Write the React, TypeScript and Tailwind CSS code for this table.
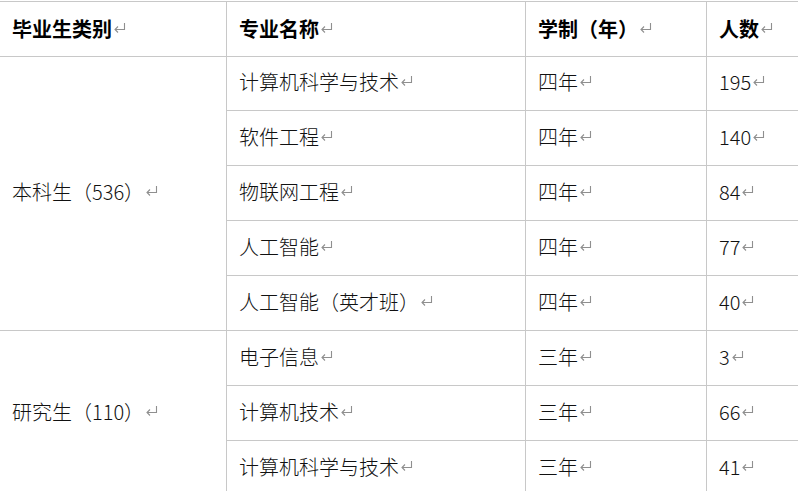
import React from "react";

const Ret = () => (
  <svg width="13" height="11" viewBox="0 0 13 11" className="ml-[1px] -mt-[3px] shrink-0" fill="none" stroke="#8f8f8f" strokeWidth="1.1">
    <path d="M11.5 1 V7.5 H2" />
    <path d="M5 4.5 L2 7.5 L5 10.5" />
  </svg>
);

const Cell = ({ children, bold, className = "" }: { children: React.ReactNode; bold?: boolean; className?: string }) => (
  <div className={`flex items-center pl-3 border-b border-r border-[#c8c8c8] whitespace-nowrap ${bold ? "font-bold text-black" : "font-light text-[#111] pb-[3px]"} ${className}`}>
    <span>{children}</span>
    <Ret />
  </div>
);

const rows: [string, string, string][] = [
  ["计算机科学与技术", "四年", "195"],
  ["软件工程", "四年", "140"],
  ["物联网工程", "四年", "84"],
  ["人工智能", "四年", "77"],
  ["人工智能（英才班）", "四年", "40"],
  ["电子信息", "三年", "3"],
  ["计算机技术", "三年", "66"],
  ["计算机科学与技术", "三年", "41"],
];

export default function App() {
  return (
    <div className="w-[798px] h-[491px] overflow-hidden bg-white pt-px" style={{ fontFamily: '"Noto Sans CJK SC", "Noto Sans", sans-serif' }}>
      <div className="grid grid-cols-[227px_299px_181px_120px] grid-rows-[55px_54px_55px_55px_55px_55px_55px_55px_55px] border-t border-[#c8c8c8] text-[20px] leading-none w-[827px]">
        <Cell bold>毕业生类别</Cell>
        <Cell bold>专业名称</Cell>
        <Cell bold>学制（年）</Cell>
        <Cell bold>人数</Cell>
        <Cell className="row-span-5">本科生（536）</Cell>
        {rows.slice(0, 5).map((r, i) => (
          <React.Fragment key={i}>
            <Cell>{r[0]}</Cell>
            <Cell>{r[1]}</Cell>
            <Cell>{r[2]}</Cell>
          </React.Fragment>
        ))}
        <Cell className="row-span-3">研究生（110）</Cell>
        {rows.slice(5).map((r, i) => (
          <React.Fragment key={i}>
            <Cell>{r[0]}</Cell>
            <Cell>{r[1]}</Cell>
            <Cell>{r[2]}</Cell>
          </React.Fragment>
        ))}
      </div>
    </div>
  );
}
